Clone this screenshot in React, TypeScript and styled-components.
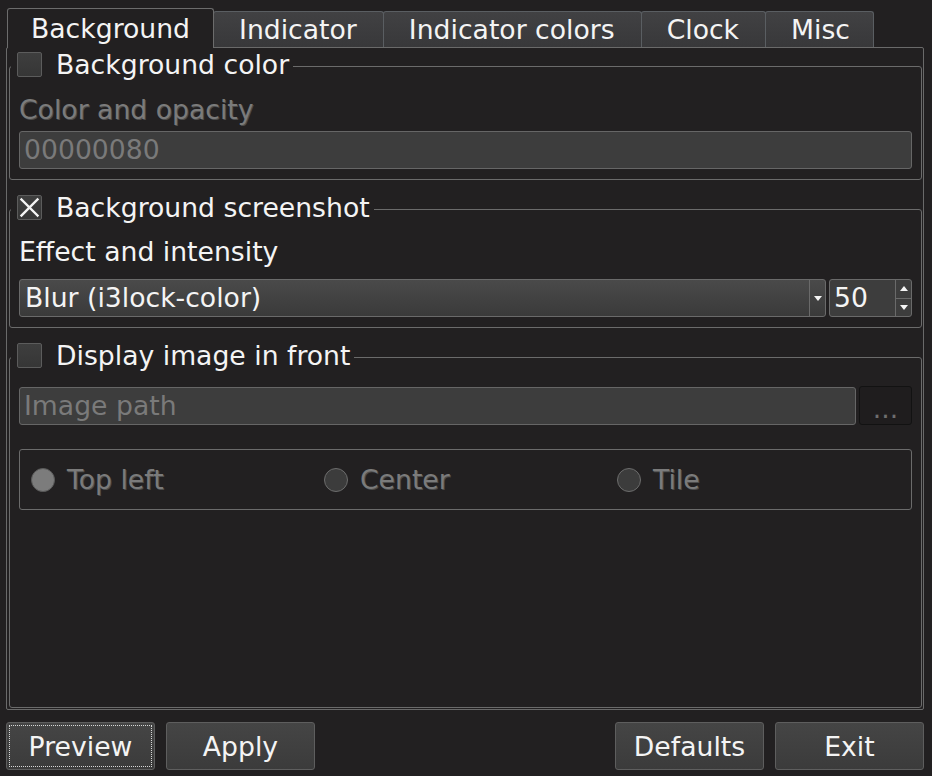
import styled, { createGlobalStyle } from 'styled-components'

const GlobalStyle = createGlobalStyle`
  html, body {
    margin: 0;
    padding: 0;
    background: #222021;
  }
  body {
    font-family: 'DejaVu Sans', 'Liberation Sans', sans-serif;
    font-size: 26.67px;
    color: #f4f4f4;
  }
  * {
    box-sizing: border-box;
  }
`

const WindowStyled = styled.div`
  width: 932px;
  height: 776px;
  display: flex;
  flex-direction: column;
  padding: 8px 8px 6px 6px;
  background: #222021;
`

const TabBarStyled = styled.div`
  display: flex;
  align-items: flex-end;
  height: 39px;
  padding-left: 1px;
`

const TabStyled = styled.div<{ $active?: boolean }>`
  position: relative;
  z-index: ${p => (p.$active ? 2 : 1)};
  height: ${p => (p.$active ? '40px' : '36px')};
  margin-bottom: ${p => (p.$active ? '-1px' : '0')};
  margin-right: -1px;
  padding: ${p => (p.$active ? '2px 23px 0' : '2px 26px 0 25px')};
  display: flex;
  align-items: center;
  line-height: 1;
  white-space: nowrap;
  border: 1px solid ${p => (p.$active ? '#6c6c6c' : '#5a5e62')};
  border-bottom: none;
  border-radius: 3px 3px 0 0;
  background: ${p =>
    p.$active ? '#222021' : 'linear-gradient(#414143, #38383a)'};
  color: #f4f4f4;
  &:last-child {
    padding-right: 23px;
  }
`

const PaneStyled = styled.div`
  flex: 1;
  display: flex;
  flex-direction: column;
  gap: 15px;
  padding: 4px 1px 1px 2px;
  border: 1px solid #6a6a6a;
  border-radius: 2px;
`

const GroupStyled = styled.fieldset<{ $grow?: boolean }>`
  margin: 0;
  min-width: 0;
  flex: ${p => (p.$grow ? 1 : 'none')};
  display: flex;
  flex-direction: column;
  padding: 0 9px 10px 9px;
  border: 1px solid #6b6b6b;
  border-radius: 3px;
`

const LegendStyled = styled.legend`
  display: flex;
  align-items: center;
  gap: 14px;
  height: 28px;
  margin-left: -8px;
  padding: 0 4px 3px 6px;
  line-height: 25px;
  white-space: nowrap;
`

const CheckBoxStyled = styled.span`
  width: 25px;
  height: 25px;
  flex: none;
  display: flex;
  align-items: center;
  justify-content: center;
  border: 1px solid #5c5c5c;
  border-radius: 2px;
  background: linear-gradient(#3e3e3e, #363636);
`

const LabelStyled = styled.div<{ $disabled?: boolean; $top: number }>`
  margin-top: ${p => p.$top}px;
  line-height: 31px;
  height: 31px;
  color: ${p => (p.$disabled ? '#7b7b7b' : '#f4f4f4')};
  text-shadow: ${p => (p.$disabled ? '1px 1px 0 #4c4c4c' : 'none')};
`

const LineEditStyled = styled.div<{ $top: number }>`
  margin-top: ${p => p.$top}px;
  height: 38px;
  display: flex;
  align-items: center;
  padding: 1px 4px 0;
  line-height: 1;
  border: 1px solid #666;
  border-radius: 3px;
  background: #3d3d3d;
  color: #7a7a7a;
`

const RowStyled = styled.div<{ $top: number; $gap: number }>`
  margin-top: ${p => p.$top}px;
  display: flex;
  align-items: center;
  gap: ${p => p.$gap}px;
  & > ${LineEditStyled} {
    flex: 1;
    margin-top: 0;
  }
`

const ComboStyled = styled.div`
  flex: 1;
  height: 38px;
  display: flex;
  border: 1px solid #6a6a6a;
  border-radius: 3px;
  background: linear-gradient(#4a4a4a, #3a3a3a);
  overflow: hidden;
`

const ComboTextStyled = styled.div`
  flex: 1;
  display: flex;
  align-items: center;
  padding: 1px 5px 0;
  line-height: 1;
`

const ArrowBoxStyled = styled.div`
  width: 16px;
  flex: none;
  display: flex;
  align-items: center;
  justify-content: center;
  border-left: 1px solid #6a6a6a;
`

const SpinStyled = styled.div`
  width: 83px;
  height: 38px;
  display: flex;
  border: 1px solid #6a6a6a;
  border-radius: 3px;
  background: #3d3d3d;
  overflow: hidden;
`

const SpinValueStyled = styled.div`
  flex: 1;
  display: flex;
  align-items: center;
  padding: 1px 4px 0;
  line-height: 1;
`

const SpinArrowsStyled = styled.div`
  width: 16px;
  display: flex;
  flex-direction: column;
  border-left: 1px solid #6a6a6a;
  & > div {
    flex: 1;
    display: flex;
    align-items: center;
    justify-content: center;
  }
  & > div + div {
    border-top: 1px solid #6a6a6a;
  }
`

const DotsButtonStyled = styled.div`
  width: 53px;
  height: 39px;
  flex: none;
  display: flex;
  align-items: center;
  justify-content: center;
  padding-top: 7px;
  line-height: 1;
  border: 1px solid #121212;
  border-radius: 3px;
  background: #1f1d1e;
  color: #6e6e6e;
`

const RadioBoxStyled = styled.div`
  margin-top: 24px;
  height: 61px;
  display: grid;
  grid-template-columns: repeat(3, 1fr);
  gap: 10px;
  align-items: center;
  padding: 1px 11px 0;
  border: 1px solid #6b6b6b;
  border-radius: 3px;
`

const RadioItemStyled = styled.div`
  display: flex;
  align-items: center;
  gap: 12px;
  line-height: 1;
  color: #7b7b7b;
  text-shadow: 1px 1px 0 #4c4c4c;
`

const RadioDotStyled = styled.span<{ $checked?: boolean }>`
  width: 24px;
  height: 24px;
  flex: none;
  border-radius: 50%;
  border: 1px solid ${p => (p.$checked ? '#5a5a5a' : '#6c6c6c')};
  background: ${p => (p.$checked ? '#7c7c7c' : '#3c3c3c')};
`

const ButtonRowStyled = styled.div`
  margin-top: 12px;
  height: 48px;
  display: flex;
  gap: 11px;
`

const SpacerStyled = styled.div`
  flex: 1;
`

const PushButtonStyled = styled.div<{ $focused?: boolean }>`
  position: relative;
  width: 149px;
  height: 48px;
  display: flex;
  align-items: center;
  justify-content: center;
  padding-top: 2px;
  line-height: 1;
  border: 1px solid #5e5e5e;
  border-radius: 3px;
  background: linear-gradient(#454545, #3b3b3b);
  color: #f4f4f4;
  &::after {
    content: '';
    display: ${p => (p.$focused ? 'block' : 'none')};
    position: absolute;
    inset: 2px;
    border: 1px dotted #d8d8d8;
  }
`

const CheckBox = ({ checked }: { checked?: boolean }) => (
  <CheckBoxStyled>
    {checked && (
      <svg width="23" height="23" viewBox="0 0 23 23">
        <path
          d="M3.5 3.5 L19.5 19.5 M19.5 3.5 L3.5 19.5"
          stroke="#f4f4f4"
          strokeWidth="2.4"
          strokeLinecap="square"
        />
      </svg>
    )}
  </CheckBoxStyled>
)

const Triangle = ({ up }: { up?: boolean }) => (
  <svg width="8" height="5" viewBox="0 0 8 5">
    <path d={up ? 'M0 5 L4 0 L8 5 Z' : 'M0 0 L8 0 L4 5 Z'} fill="#f4f4f4" />
  </svg>
)

const tabs = ['Background', 'Indicator', 'Indicator colors', 'Clock', 'Misc']

export default function App() {
  return (
    <>
      <GlobalStyle />
      <WindowStyled>
        <TabBarStyled>
          {tabs.map((t, i) => (
            <TabStyled key={t} $active={i === 0}>
              {t}
            </TabStyled>
          ))}
        </TabBarStyled>

        <PaneStyled>
          <GroupStyled>
            <LegendStyled>
              <CheckBox />
              Background color
            </LegendStyled>
            <LabelStyled $disabled $top={14}>
              Color and opacity
            </LabelStyled>
            <LineEditStyled $top={6}>00000080</LineEditStyled>
          </GroupStyled>

          <GroupStyled>
            <LegendStyled>
              <CheckBox checked />
              Background screenshot
            </LegendStyled>
            <LabelStyled $top={13}>Effect and intensity</LabelStyled>
            <RowStyled $top={12} $gap={3}>
              <ComboStyled>
                <ComboTextStyled>Blur (i3lock-color)</ComboTextStyled>
                <ArrowBoxStyled>
                  <Triangle />
                </ArrowBoxStyled>
              </ComboStyled>
              <SpinStyled>
                <SpinValueStyled>50</SpinValueStyled>
                <SpinArrowsStyled>
                  <div>
                    <Triangle up />
                  </div>
                  <div>
                    <Triangle />
                  </div>
                </SpinArrowsStyled>
              </SpinStyled>
            </RowStyled>
          </GroupStyled>

          <GroupStyled $grow>
            <LegendStyled>
              <CheckBox />
              Display image in front
            </LegendStyled>
            <RowStyled $top={15} $gap={3}>
              <LineEditStyled $top={0}>Image path</LineEditStyled>
              <DotsButtonStyled>...</DotsButtonStyled>
            </RowStyled>
            <RadioBoxStyled>
              <RadioItemStyled>
                <RadioDotStyled $checked />
                Top left
              </RadioItemStyled>
              <RadioItemStyled>
                <RadioDotStyled />
                Center
              </RadioItemStyled>
              <RadioItemStyled>
                <RadioDotStyled />
                Tile
              </RadioItemStyled>
            </RadioBoxStyled>
          </GroupStyled>
        </PaneStyled>

        <ButtonRowStyled>
          <PushButtonStyled $focused>Preview</PushButtonStyled>
          <PushButtonStyled>Apply</PushButtonStyled>
          <SpacerStyled />
          <PushButtonStyled>Defaults</PushButtonStyled>
          <PushButtonStyled>Exit</PushButtonStyled>
        </ButtonRowStyled>
      </WindowStyled>
    </>
  )
}
